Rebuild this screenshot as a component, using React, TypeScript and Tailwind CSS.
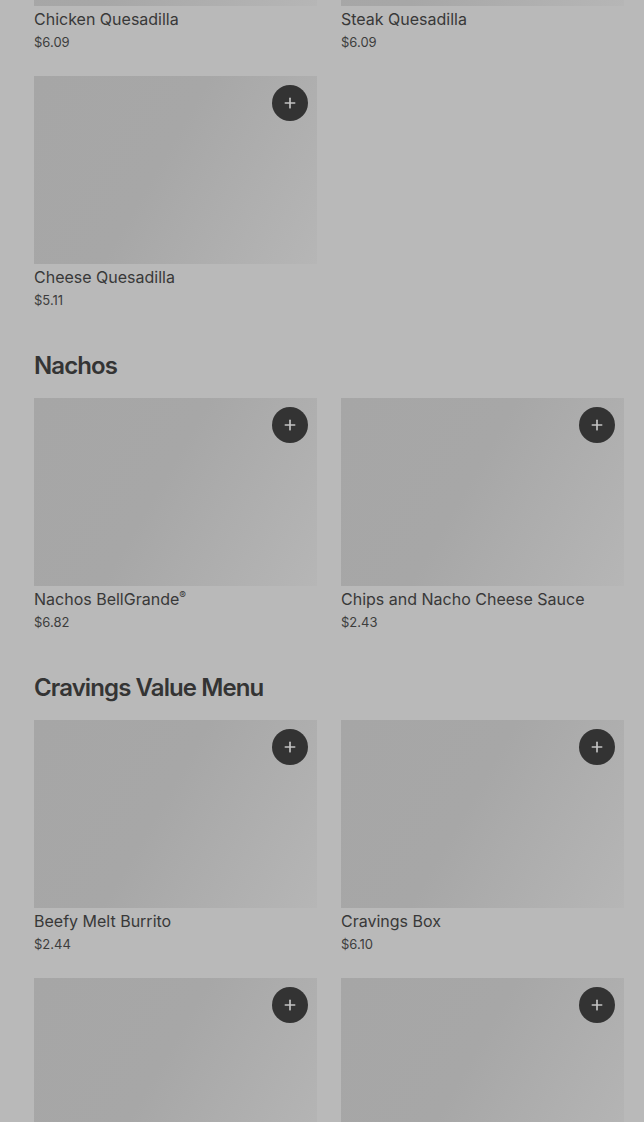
import { Plus } from "lucide-react";

type Item = { name: string; price: string; mark?: boolean };

const sections: { title?: string; items: Item[] }[] = [
  {
    items: [
      { name: "Chicken Quesadilla", price: "$6.09" },
      { name: "Steak Quesadilla", price: "$6.09" },
      { name: "Cheese Quesadilla", price: "$5.11" },
    ],
  },
  {
    title: "Nachos",
    items: [
      { name: "Nachos BellGrande", price: "$6.82", mark: true },
      { name: "Chips and Nacho Cheese Sauce", price: "$2.43" },
    ],
  },
  {
    title: "Cravings Value Menu",
    items: [
      { name: "Beefy Melt Burrito", price: "$2.44" },
      { name: "Cravings Box", price: "$6.10" },
      { name: "Cheesy Roll Up", price: "$1.31" },
      { name: "Spicy Potato Soft Taco", price: "$1.31" },
    ],
  },
];

const MenuCard = ({ item }: { item: Item }) => (
  <div>
    <div className="relative h-[188px] bg-[linear-gradient(120deg,#a6a6a6_0%,#a7a7a7_45%,#b6b6b6_100%)]">
      <button className="absolute top-[9px] right-[9px] w-9 h-9 rounded-full bg-[#333333] flex items-center justify-center text-[#c4c4c4]">
        <Plus size={16} strokeWidth={2.5} />
      </button>
    </div>
    <p className="mt-px text-[16px] leading-6 text-[#383838]">
      {item.name}
      {item.mark && <span className="text-[10px] align-top leading-none relative top-[3px]">®</span>}
    </p>
    <p className="mt-px text-[13px] leading-5 text-[#3d3d3d]">{item.price}</p>
  </div>
);

export default function App() {
  return (
    <div
      className="min-h-screen bg-[#b9b9b9] overflow-hidden pl-[34px] pr-[20px]"
      style={{ fontFamily: "Inter, 'Liberation Sans', sans-serif" }}
    >
      <div className="-mt-[182px] pb-10">
        {sections.map((section, i) => (
          <div key={i}>
            {section.title && (
              <h2 className="mt-10 mb-4 text-[24px] leading-8 font-semibold tracking-[-0.9px] text-[#343434]">
                {section.title}
              </h2>
            )}
            <div className="grid grid-cols-2 gap-x-6 gap-y-6">
              {section.items.map((item) => (
                <MenuCard key={item.name} item={item} />
              ))}
            </div>
          </div>
        ))}
      </div>
    </div>
  );
}
